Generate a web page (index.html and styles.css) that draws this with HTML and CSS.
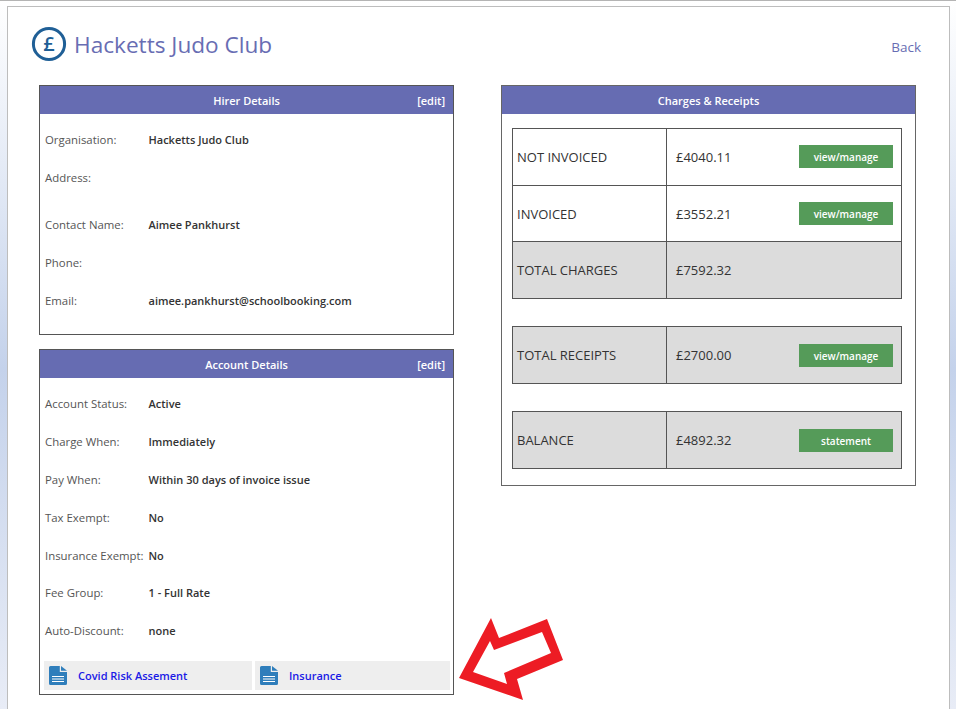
FILE: index.html
```html
<!DOCTYPE html>
<html lang="en">
<head>
<meta charset="utf-8">
<title>Hacketts Judo Club</title>
<link rel="stylesheet" href="styles.css">
</head>
<body>
<div class="sheet">
  <header class="top">
    <div class="brand">
      <svg class="logo" viewBox="0 0 36 36" width="36" height="36" aria-hidden="true">
        <circle cx="18" cy="18" r="15.6" fill="none" stroke="#1f5f96" stroke-width="3"/>
        <text x="18" y="24.5" text-anchor="middle" class="logo-text">£</text>
      </svg>
      <h1 class="title">Hacketts Judo Club</h1>
    </div>
    <a class="back" href="#">Back</a>
  </header>
  <div class="columns">
    <div class="col">
      <section class="panel hirer">
        <div class="panel-head"><span>Hirer Details</span><a class="edit" href="#">[edit]</a></div>
        <div class="rows">
          <div class="row"><span class="lbl">Organisation:</span><span class="val">Hacketts Judo Club</span></div>
          <div class="row tall"><span class="lbl">Address:</span><span class="val"></span></div>
          <div class="row"><span class="lbl">Contact Name:</span><span class="val">Aimee Pankhurst</span></div>
          <div class="row"><span class="lbl">Phone:</span><span class="val"></span></div>
          <div class="row"><span class="lbl">Email:</span><span class="val">aimee.pankhurst@schoolbooking.com</span></div>
        </div>
      </section>
      <section class="panel account">
        <div class="panel-head"><span>Account Details</span><a class="edit" href="#">[edit]</a></div>
        <div class="rows">
          <div class="row"><span class="lbl">Account Status:</span><span class="val">Active</span></div>
          <div class="row"><span class="lbl">Charge When:</span><span class="val">Immediately</span></div>
          <div class="row"><span class="lbl">Pay When:</span><span class="val">Within 30 days of invoice issue</span></div>
          <div class="row"><span class="lbl">Tax Exempt:</span><span class="val">No</span></div>
          <div class="row"><span class="lbl">Insurance Exempt:</span><span class="val">No</span></div>
          <div class="row"><span class="lbl">Fee Group:</span><span class="val">1 - Full Rate</span></div>
          <div class="row"><span class="lbl">Auto-Discount:</span><span class="val">none</span></div>
        </div>
        <div class="docs">
          <a class="doc doc-a" href="#">
            <svg class="doc-icon" viewBox="0 0 18 19" width="18" height="19" aria-hidden="true"><path d="M1.5 0h9.3v6H18v11.5a1.5 1.5 0 0 1-1.5 1.5h-15A1.5 1.5 0 0 1 0 17.5v-16A1.5 1.5 0 0 1 1.5 0z" fill="#2f7ebb"/><path d="M12 0l6 4.8h-6z" fill="#2f7ebb"/><path d="M3 10.5h12M3 13h12M3 15.5h12" stroke="#fff" stroke-width="1"/></svg>
            Covid Risk Assement
          </a>
          <a class="doc doc-b" href="#">
            <svg class="doc-icon" viewBox="0 0 18 19" width="18" height="19" aria-hidden="true"><path d="M1.5 0h9.3v6H18v11.5a1.5 1.5 0 0 1-1.5 1.5h-15A1.5 1.5 0 0 1 0 17.5v-16A1.5 1.5 0 0 1 1.5 0z" fill="#2f7ebb"/><path d="M12 0l6 4.8h-6z" fill="#2f7ebb"/><path d="M3 10.5h12M3 13h12M3 15.5h12" stroke="#fff" stroke-width="1"/></svg>
            Insurance
          </a>
        </div>
      </section>
    </div>
    <div class="col">
      <section class="panel charges">
        <div class="panel-head"><span>Charges &amp; Receipts</span></div>
        <div class="tables">
          <div class="tbl">
            <div class="tr"><div class="td name">NOT INVOICED</div><div class="td amt"><span>£4040.11</span><a class="btn" href="#">view/manage</a></div></div>
            <div class="tr"><div class="td name">INVOICED</div><div class="td amt"><span>£3552.21</span><a class="btn" href="#">view/manage</a></div></div>
            <div class="tr grey"><div class="td name">TOTAL CHARGES</div><div class="td amt"><span>£7592.32</span></div></div>
          </div>
          <div class="tbl">
            <div class="tr grey"><div class="td name">TOTAL RECEIPTS</div><div class="td amt"><span>£2700.00</span><a class="btn" href="#">view/manage</a></div></div>
          </div>
          <div class="tbl">
            <div class="tr grey"><div class="td name">BALANCE</div><div class="td amt"><span>£4892.32</span><a class="btn" href="#">statement</a></div></div>
          </div>
        </div>
      </section>
    </div>
  </div>
  <svg class="arrow" viewBox="0 0 110 90" width="110" height="90" aria-hidden="true">
    <path fill="#ed1c24" fill-rule="evenodd" d="M36 3L44 23L92 4L108 45L62 64L68 85L4 63ZM35 26L18 57L52 69L49 58L96 38L87 17L39 35Z"/>
  </svg>
</div>
</body>
</html>
```

FILE: styles.css
```css
html, body {
  margin: 0;
  height: 100%;
}
body {
  height: 709px;
  overflow: hidden;
  box-sizing: border-box;
  border-top: 1px solid #b4b4b4;
  padding: 5px 6px 0 7px;
  background: linear-gradient(180deg, #ffffff 0%, #c4d2eb 52%, #e8ecf6 100%);
  font-family: "Open Sans", "Noto Sans", sans-serif;
  color: #333;
}
.sheet {
  position: relative;
  box-sizing: border-box;
  height: 703px;
  overflow: hidden;
  background: #fff;
  border: 1px solid #bdbdbd;
  border-bottom: 0;
  padding: 0 33px 0 31px;
}
.top {
  display: flex;
  justify-content: space-between;
  align-items: center;
  height: 78px;
}
.brand {
  display: flex;
  align-items: center;
  gap: 7px;
  margin-left: -8px;
  margin-top: -2px;
}
.logo {
  display: block;
  margin-bottom: 3px;
}
.logo-text {
  font: 600 20px "Open Sans", sans-serif;
  fill: #1f5f96;
}
.title {
  margin: 0;
  font-size: 22.6px;
  font-weight: 400;
  line-height: 32px;
  color: #686db3;
}
.back {
  margin-right: -5px;
  margin-top: 1px;
  font-size: 13.5px;
  color: #686db3;
  text-decoration: none;
}
.columns {
  display: flex;
  gap: 47px;
}
.col {
  width: 415px;
  display: flex;
  flex-direction: column;
  gap: 14px;
}
.panel {
  box-sizing: border-box;
  border: 1px solid #555;
  background: #fff;
}
.hirer { height: 250px; }
.account { height: 346px; }
.charges { height: 401px; border-color: #666; }
.panel-head {
  position: relative;
  height: 28px;
  background: #666cb2;
  color: #fff;
  font-size: 11px;
  font-weight: 600;
  line-height: 30px;
  text-align: center;
}
.edit {
  position: absolute;
  right: 8px;
  top: 0;
  color: #fff;
  text-decoration: none;
}
.rows {
  padding: 7px 5px 0;
}
.row {
  display: flex;
  height: 37.8px;
  align-items: center;
  font-size: 11.4px;
}
.row.tall { height: 47px; align-items: flex-start; padding-top: 11px; box-sizing: border-box; }
.lbl {
  width: 103.5px;
  flex: none;
  color: #555;
  white-space: nowrap;
}
.val {
  color: #333;
  font-size: 11px;
  font-weight: 600;
  white-space: nowrap;
}
.docs {
  display: flex;
  gap: 3px;
  padding: 0 3px 0 4px;
  margin-top: 11.6px;
}
.doc {
  display: flex;
  align-items: center;
  height: 29px;
  gap: 11px;
  padding-left: 5px;
  box-sizing: border-box;
  background: #eee;
  color: #1a1ae6;
  font-size: 11px;
  font-weight: 600;
  text-decoration: none;
}
.doc-a { width: 208px; }
.doc-b { flex: 1; }
.doc-icon { flex: none; }
.tables {
  padding: 14px 13px 0 10px;
  display: flex;
  flex-direction: column;
  gap: 27.3px;
}
.tbl {
  border: 1px solid #555;
  border-bottom: 0;
}
.tr {
  display: flex;
  height: 55.7px;
  border-bottom: 1px solid #555;
  font-size: 13px;
  font-weight: 500;
  color: #333;
}
.tr.grey { background: #dcdcdc; }
.td {
  display: flex;
  align-items: center;
  box-sizing: border-box;
}
.name {
  width: 154px;
  padding-left: 4px;
  border-right: 1px solid #555;
}
.amt {
  flex: 1;
  justify-content: space-between;
  padding: 0 8px 0 9px;
}
.btn {
  width: 94px;
  height: 23px;
  background: #559b59;
  color: #fff;
  font-size: 10px;
  font-weight: 600;
  line-height: 24px;
  text-align: center;
  text-decoration: none;
}
.arrow {
  position: absolute;
  left: 447px;
  top: 608px;
}
```
